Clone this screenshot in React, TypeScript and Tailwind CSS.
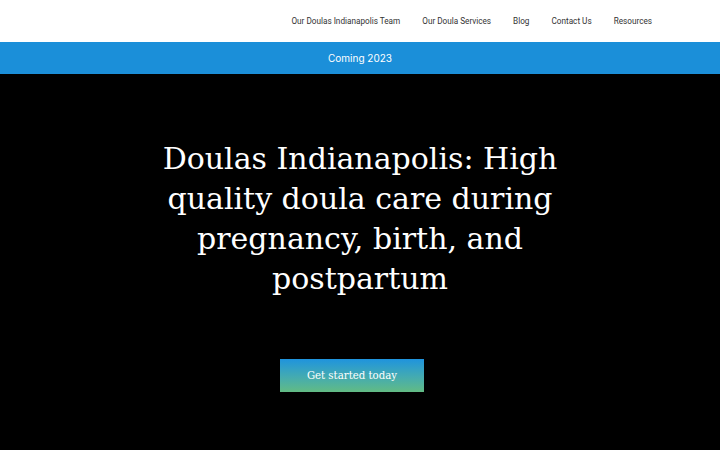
const navLinks = ['Our Doulas Indianapolis Team', 'Our Doula Services', 'Blog', 'Contact Us', 'Resources'];

export default function App() {
  return (
    <div className="min-h-[450px] w-full bg-black">
      <header className="flex h-[42px] items-center justify-end bg-white pr-[68px]">
        <nav className="flex items-center gap-[22px] font-['Roboto',sans-serif] text-[8.2px] text-[#333]">
          {navLinks.map((l) => (
            <a key={l} href="#">
              {l}
            </a>
          ))}
        </nav>
      </header>
      <div className="flex h-[32px] items-center bg-[#1b8fd9] pl-[328px] font-['Inter',sans-serif] text-[10px] text-white">
        Coming 2023
      </div>
      <main className="flex flex-col items-center bg-black pt-[65px] pb-[58px]">
        <h1 className="w-[430px] text-center font-['DejaVu_Serif',serif] text-[30px] leading-[40px] text-white">
          Doulas Indianapolis: High quality doula care during pregnancy, birth, and postpartum
        </h1>
        <a
          href="#"
          className="mt-[60px] mr-[16px] flex h-[33px] w-[144px] items-center justify-center bg-gradient-to-b from-[#1f93dd] to-[#62bb83] font-['DejaVu_Serif',serif] text-[10.2px] text-white"
        >
          Get started today
        </a>
      </main>
    </div>
  );
}
